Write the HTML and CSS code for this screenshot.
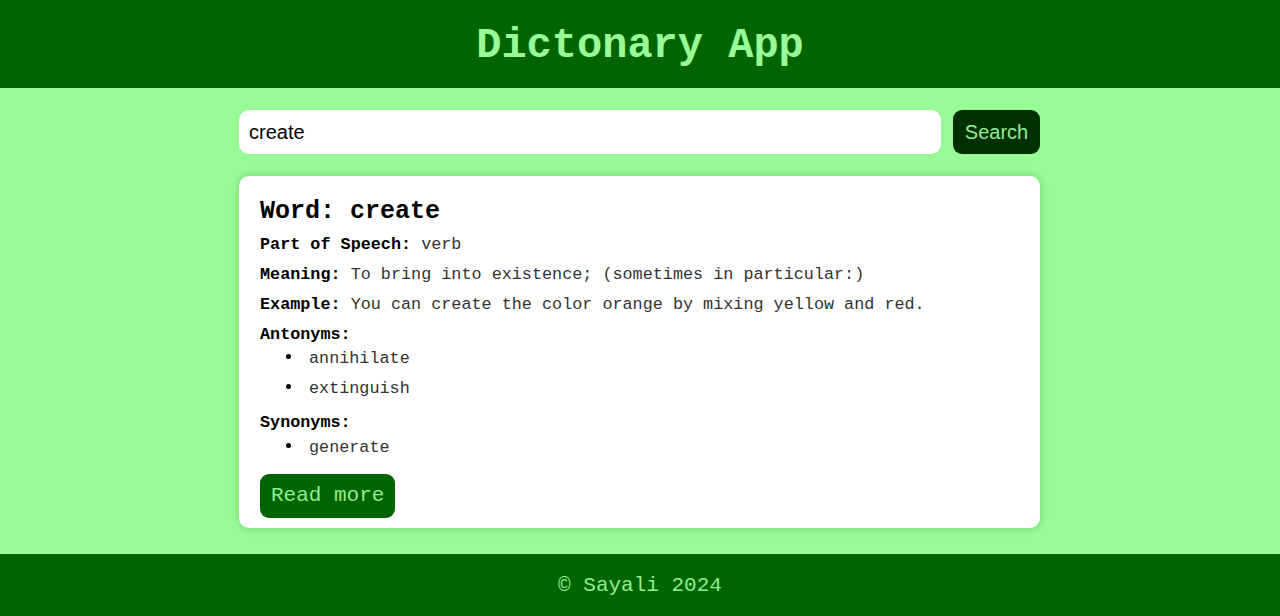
FILE: index.html
```html
<!DOCTYPE html>
<html lang="en">
<head>
<meta charset="UTF-8">
<title>Dictonary App</title>
<link rel="stylesheet" href="styles.css">
</head>
<body>
<header class="site-header">
  <h1 class="site-title">Dictonary App</h1>
</header>
<main class="main">
  <form class="search-row">
    <input class="search-input" type="text" value="create">
    <button class="search-btn" type="button">Search</button>
  </form>
  <section class="card">
    <h2 class="word">Word: create</h2>
    <p class="line"><strong>Part of Speech:</strong> verb</p>
    <p class="line"><strong>Meaning:</strong> To bring into existence; (sometimes in particular:)</p>
    <p class="line"><strong>Example:</strong> You can create the color orange by mixing yellow and red.</p>
    <p class="line"><strong>Antonyms:</strong></p>
    <ul class="list">
      <li>annihilate</li>
      <li>extinguish</li>
    </ul>
    <p class="line syn-head"><strong>Synonyms:</strong></p>
    <ul class="list syn-list">
      <li>generate</li>
    </ul>
    <a class="read-more" href="#">Read more</a>
  </section>
</main>
<footer class="site-footer">
  <p class="copy">&copy; Sayali 2024</p>
</footer>
</body>
</html>
```
FILE: styles.css
```css
* { box-sizing: border-box; }
html, body { margin: 0; padding: 0; }
body {
  background: #98fb98;
  font-family: "Liberation Mono", "Courier New", monospace;
  min-height: 616px;
  display: flex;
  flex-direction: column;
}
.site-header {
  background: #006400;
  height: 88px;
  display: flex;
  align-items: center;
  justify-content: center;
  padding-top: 4px;
}
.site-title {
  margin: 0;
  color: #98fb98;
  font-size: 42px;
  font-weight: bold;
  line-height: 1;
}
.main {
  flex: 1;
  width: 802px;
  margin: 0 auto;
  padding: 22px 1px 26px 0;
}
.search-row {
  display: flex;
  gap: 12px;
  margin: 0 0 22px;
}
.search-input {
  flex: 1;
  height: 44px;
  border: none;
  border-radius: 10px;
  background: #fff;
  padding: 0 10px;
  font-family: "Liberation Sans", Arial, sans-serif;
  font-size: 20px;
  color: #000;
  outline: none;
}
.search-btn {
  width: 87px;
  height: 44px;
  border: none;
  border-radius: 9px;
  background: #002f00;
  color: #90ee90;
  font-family: "Liberation Sans", Arial, sans-serif;
  font-size: 20px;
  padding: 0;
}
.card {
  background: #fff;
  border-radius: 10px;
  box-shadow: 0 0 10px rgba(0, 100, 0, 0.25);
  padding: 21px 21px 10px;
}
.word {
  margin: 0 0 9px;
  font-size: 25px;
  line-height: 29px;
  color: #000;
}
.line {
  margin: 0 0 10px;
  font-size: 16.8px;
  line-height: 20px;
  color: #333;
}
.line strong { color: #000; }
.list {
  list-style: none;
  margin: -6px 0 14px;
  padding-left: 49px;
  font-size: 16.8px;
  line-height: 20px;
  color: #333;
}
.list li { margin-bottom: 10px; }
.list li:last-child { margin-bottom: 0; }
.list li::before {
  content: "";
  display: inline-block;
  width: 5px;
  height: 5px;
  border-radius: 50%;
  background: #000;
  margin-left: -23px;
  margin-right: 18px;
  vertical-align: 4px;
}
.syn-head { margin-bottom: 5px; }
.syn-list { margin: 0 0 16px; }
.read-more {
  display: inline-block;
  background: #006400;
  color: #90ee90;
  text-decoration: none;
  font-size: 21px;
  line-height: 44px;
  height: 44px;
  padding: 0 11px;
  border-radius: 9px;
}
.site-footer {
  background: #006400;
  height: 62px;
  display: flex;
  align-items: center;
  justify-content: center;
}
.copy {
  margin: 0;
  color: #90ee90;
  font-size: 21px;
}
```
